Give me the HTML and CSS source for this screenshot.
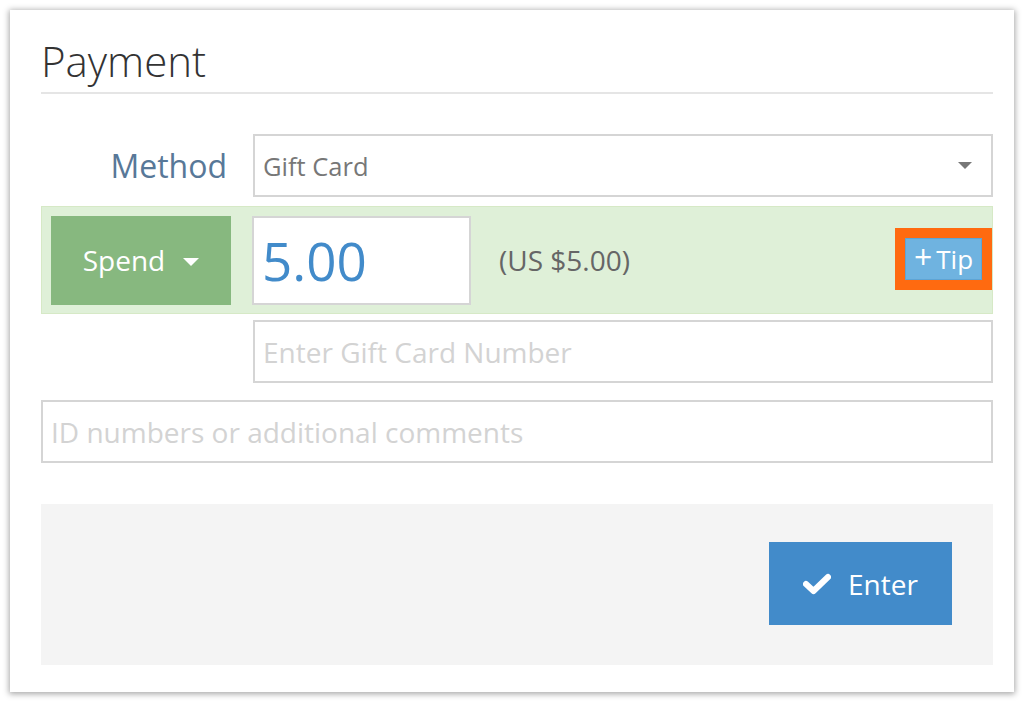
FILE: index.html
```html
<!DOCTYPE html>
<html>
<head>
<meta charset="utf-8">
<link rel="stylesheet" href="styles.css">
</head>
<body>
<div class="card">
  <h1 class="title">Payment</h1>
  <div class="row method-row">
    <label class="label">Method</label>
    <div class="select">
      <span class="select-text">Gift Card</span>
      <span class="select-caret"></span>
    </div>
  </div>
  <div class="spend-row">
    <div class="spend-btn">Spend <span class="spend-caret"></span></div>
    <div class="amount">5.00</div>
    <div class="usd">(US $5.00)</div>
    <div class="tip-wrap"><div class="tip-btn"><span class="plus">+</span>Tip</div></div>
  </div>
  <div class="row">
    <div class="label"></div>
    <div class="input placeholder">Enter Gift Card Number</div>
  </div>
  <div class="input comments placeholder">ID numbers or additional comments</div>
  <div class="footer">
    <div class="enter-btn">
      <svg class="check" width="28" height="22" viewBox="0 0 28 22"><path d="M3 11 L10.5 18 L25 4" fill="none" stroke="#fff" stroke-width="6" stroke-linecap="round" stroke-linejoin="round"/></svg>
      <span>Enter</span>
    </div>
  </div>
</div>
</body>
</html>
```

FILE: styles.css
```css
* { box-sizing: border-box; }
html, body { margin: 0; padding: 0; background: #fff; }
body {
  font-family: "Open Sans", "Liberation Sans", sans-serif;
  padding: 10px;
}
.card {
  width: 1004px;
  height: 682px;
  background: #fff;
  box-shadow: 0 1px 6px 1px rgba(0,0,0,0.35);
  padding: 0 21px 27px 31px;
  display: flex;
  flex-direction: column;
}
.title {
  margin: 0;
  font-weight: 300;
  font-size: 42px;
  line-height: 46px;
  color: #333;
  padding-top: 28px;
  padding-bottom: 8px;
  border-bottom: 2px solid #e5e5e5;
  width: 952px;
}
.row {
  display: flex;
  align-items: center;
}
.method-row { margin-top: 40px; }
.label {
  width: 212px;
  flex: none;
  text-align: right;
  padding-right: 26px;
  font-size: 32px;
  color: #587898;
}
.select, .input {
  width: 740px;
  height: 63px;
  border: 2px solid #d5d5d5;
  display: flex;
  align-items: center;
  padding: 0 8px;
  font-size: 25.5px;
  color: #777;
}
.select { justify-content: space-between; padding-right: 19px; }
.select-caret {
  width: 0; height: 0;
  border-left: 7px solid transparent;
  border-right: 7px solid transparent;
  border-top: 7px solid #777;
}
.spend-row {
  margin-top: 9px;
  width: 952px;
  height: 108px;
  background: #dff0d8;
  border: 1px solid #d6e9c6;
  display: flex;
  align-items: center;
  padding: 0 9px;
}
.spend-btn {
  width: 180px;
  height: 89px;
  background: #87b87f;
  color: #fff;
  font-size: 28px;
  display: flex;
  align-items: center;
  justify-content: center;
  gap: 18px;
}
.spend-caret {
  width: 0; height: 0;
  border-left: 8px solid transparent;
  border-right: 8px solid transparent;
  border-top: 8px solid #fff;
  margin-top: 4px;
}
.amount {
  margin-left: 21px;
  width: 219px;
  height: 89px;
  background: #fff;
  border: 2px solid #d5d5d5;
  font-size: 53px;
  color: #428bca;
  display: flex;
  align-items: center;
  padding-left: 8px;
}
.usd {
  margin-left: 28px;
  font-size: 28px;
  color: #666;
  flex: 1;
}
.tip-wrap {
  background: #ff6a10;
  padding: 10px;
  margin-right: -9px;
  margin-top: -3px;
}
.tip-btn {
  width: 77px;
  height: 42px;
  background: #6fb3e0;
  border: 1px solid #5ea4d4;
  color: #fff;
  font-size: 26px;
  display: flex;
  align-items: center;
  justify-content: center;
}
.plus { font-size: 32px; font-weight: 400; margin-right: 4px; margin-top: -4px; }
.row + .row, .spend-row + .row { margin-top: 6px; }
.input.placeholder { color: #d3d3d3; font-size: 28px; }
.comments { width: 952px; margin-top: 17px; }
.footer {
  margin-top: 41px;
  width: 952px;
  height: 161px;
  background: #f4f4f4;
  display: flex;
  align-items: center;
  justify-content: flex-end;
  padding-right: 41px;
}
.enter-btn {
  width: 183px;
  height: 83px;
  background: #428bca;
  color: #fff;
  font-size: 28px;
  display: flex;
  align-items: center;
  justify-content: center;
  gap: 17px;
  margin-top: -2px;
}
.check { display: block; }
```
